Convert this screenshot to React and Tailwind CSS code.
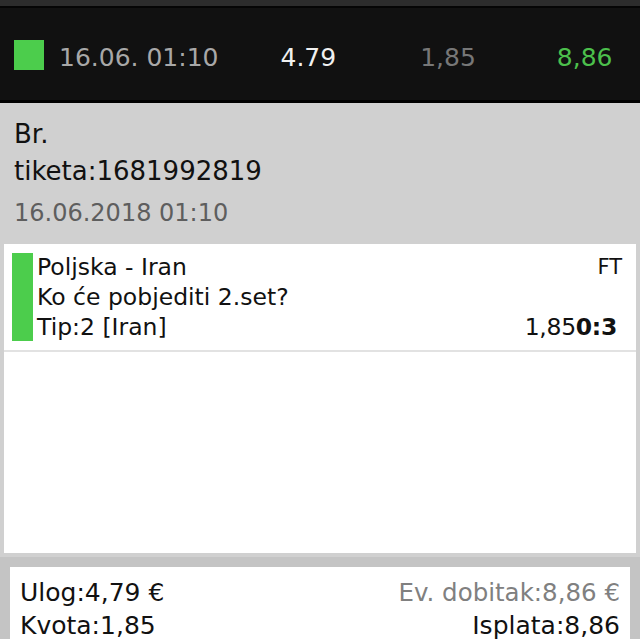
export default function App() {
  const font = { fontFamily: '"DejaVu Sans", Verdana, sans-serif' };
  return (
    <div className="w-[640px] h-[639px] overflow-hidden bg-[#d0d0d0] flex flex-col" style={font}>
      <div className="h-[6px] bg-[#2c2c2c] shrink-0" />
      <div className="h-[97px] shrink-0 bg-[#111111] border-t-2 border-b-[3px] border-t-[#050505] border-b-black flex items-center pl-[14px] text-[25px] leading-none">
        <div className="w-[30px] h-[30px] bg-[#4ccd4c] mt-[2px]" />
        <div className="ml-[15px] mt-[6px] text-[#a8a8a8]">16.06. 01:10</div>
        <div className="ml-[62px] mt-[6px] text-[#f0f0f0]">4.79</div>
        <div className="ml-[84px] mt-[6px] text-[#777777]">1,85</div>
        <div className="ml-[81px] mt-[6px] text-[#4cc04c]">8,86</div>
      </div>
      <div className="shrink-0 h-[141px] pl-[14px] pt-[13px] text-[#111]">
        <div className="text-[26px] leading-[37px]">Br.</div>
        <div className="text-[26px] leading-[37px]">tiketa:1681992819</div>
        <div className="text-[24px] leading-[30px] mt-[8px] text-[#5e5e5e]">16.06.2018 01:10</div>
      </div>
      <div className="mx-[4px] h-[309px] shrink-0 bg-white">
        <div className="flex pl-[8px] pr-[15px] pt-[9px] pb-[8px] border-b-2 border-[#e2e2e2]">
          <div className="w-[21px] h-[88px] bg-[#4ccd4c]" />
          <div className="flex-1 ml-[4px] text-[23.5px] leading-[30px] text-[#111] -mt-[1px]">
            <div className="flex justify-between">
              <span>Poljska - Iran</span>
              <span className="text-[21px] -mr-[1px]">FT</span>
            </div>
            <div>Ko će pobjediti 2.set?</div>
            <div className="flex justify-between">
              <span>Tip:2 [Iran]</span>
              <span className="mr-[4px] tracking-[-0.3px]">
                1,85<span className="font-bold">0:3</span>
              </span>
            </div>
          </div>
        </div>
      </div>
      <div className="h-[4px] shrink-0" />
      <div className="flex-1 bg-[#c4c4c4] px-[10px] pt-[10px]">
        <div className="bg-white h-full px-[10px] pt-[9px] text-[25px] leading-[33px] text-[#111]">
          <div className="flex justify-between">
            <span>Ulog:4,79 €</span>
            <span className="text-[#808080] text-[24.5px]">Ev. dobitak:8,86 €</span>
          </div>
          <div className="flex justify-between">
            <span>Kvota:1,85</span>
            <span>Isplata:8,86</span>
          </div>
        </div>
      </div>
    </div>
  );
}
